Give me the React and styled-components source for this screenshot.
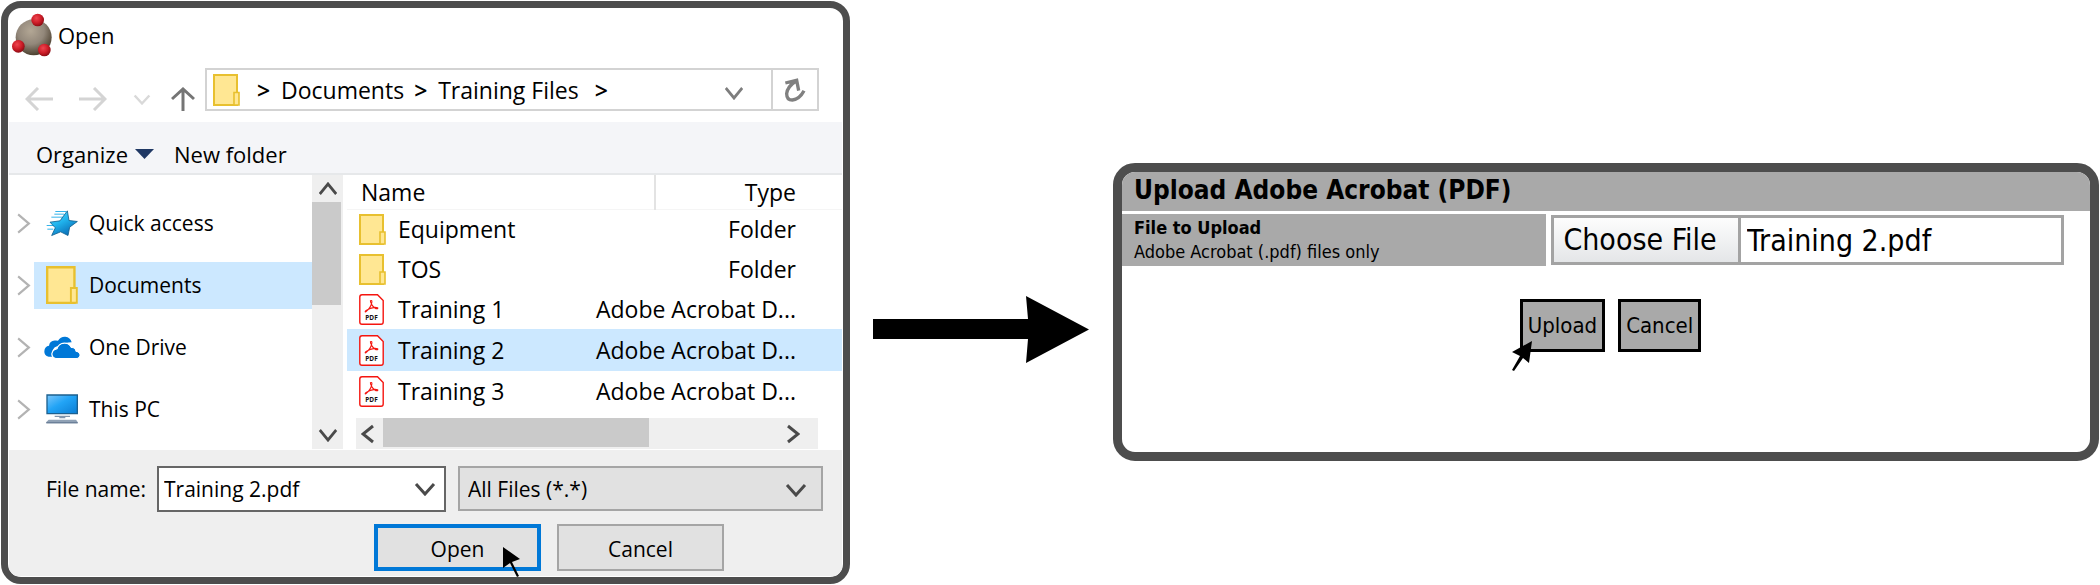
import React, {useState} from 'react';
import styled, {createGlobalStyle, css} from "styled-components";

/* ---------- icons ---------- */

const chevronPoints = {
    up: '2,12 11,2 20,12',
    down: '2,2 11,12 20,2',
    left: '12,2 2,10 12,18',
    right: '2,2 12,10 2,18',
};

const Chevron = ({dir, color = '#4a4a4a', width, height, stroke = 3}) => {
    const flat = dir === 'up' || dir === 'down';
    return (
        <svg width={width || (flat ? 22 : 14)} height={height || (flat ? 14 : 20)} preserveAspectRatio="none"
             viewBox={flat ? '0 0 22 14' : '0 0 14 20'} fill="none" aria-hidden="true">
            <polyline points={chevronPoints[dir]} stroke={color} strokeWidth={stroke}/>
        </svg>
    );
};

const AppLogo = () => (
    <svg width="40" height="44" viewBox="0 0 120 132" aria-hidden="true">
        <defs>
            <radialGradient id="ball" cx="42%" cy="32%" r="68%">
                <stop offset="0" stopColor="#b3a795"/>
                <stop offset="0.55" stopColor="#92877a"/>
                <stop offset="1" stopColor="#4d4130"/>
            </radialGradient>
            <radialGradient id="dot" cx="40%" cy="35%" r="65%">
                <stop offset="0" stopColor="#ee4650"/>
                <stop offset="0.6" stopColor="#cc1c27"/>
                <stop offset="1" stopColor="#8e0d15"/>
            </radialGradient>
        </defs>
        <circle cx="65" cy="73" r="54" fill="url(#ball)"/>
        <circle cx="77" cy="21" r="19" fill="url(#dot)"/>
        <circle cx="19" cy="100" r="19" fill="url(#dot)"/>
        <circle cx="97" cy="111" r="19" fill="url(#dot)"/>
    </svg>
);

const FolderIcon = ({width = 27, height = 32}) => (
    <svg width={width} height={height} viewBox="0 0 27 32" preserveAspectRatio="none" aria-hidden="true">
        <path d="M1 1H24V31H1Z" fill="#ffe793" stroke="#e8c02f" strokeWidth="2"/>
        <path d="M21 18.5H26V31H21Z" fill="#ffe793" stroke="#e8c02f" strokeWidth="1.6"/>
    </svg>
);

const PdfIcon = () => (
    <svg width="25" height="31" viewBox="0 0 25 31" aria-hidden="true">
        <path d="M3 0.8H18.5L24.2 6.5V28Q24.2 30.2 22 30.2H3Q0.8 30.2 0.8 28V3Q0.8 0.8 3 0.8Z"
              fill="#fff" stroke="#f5150f" strokeWidth="1.4"/>
        <path d="M11.4 6.8Q13.6 5.6 12.6 9.4Q11.6 14 6.8 17.8Q5.4 18.2 7.2 16.4Q11 14 16 13.4Q20 13.4 18.4 14.8Q15.4 14.8 12.8 10.6Q11.2 7.6 11.4 6.8Z"
              fill="none" stroke="#f5150f" strokeWidth="1.1"/>
        <text x="12.5" y="26" textAnchor="middle" fontFamily="Open Sans, sans-serif" fontSize="6.5"
              fontWeight="700" fill="#111">PDF</text>
    </svg>
);

const StarIcon = () => (
    <svg width="32" height="27" viewBox="0 0 96 80" aria-hidden="true">
        <defs>
            <linearGradient id="star" x1="0" y1="0" x2="0.6" y2="1">
                <stop offset="0" stopColor="#5fd9fb"/>
                <stop offset="0.5" stopColor="#21b5ee"/>
                <stop offset="1" stopColor="#0a6fb8"/>
            </linearGradient>
        </defs>
        <path d="M28 4H60M25 12H54M16 21H50M2 46H26M4 57H22" stroke="#35b4ea" strokeWidth="3"/>
        <path d="M64 2L69 31L94 34L71 51L66 76L44 65L17 76L28 53L12 36L42 32Z"
              fill="url(#star)" stroke="#11608f" strokeWidth="2.5" strokeLinejoin="round"/>
    </svg>
);

const CloudIcon = () => (
    <svg width="36" height="23" viewBox="0 0 108 68" aria-hidden="true">
        <path d="M14 62Q0 57 1 45Q2 31 15 29Q17 14 32 13Q38 12 42 14Q50 1 64 2Q79 4 83 18Q60 18 50 30Q30 26 24 48Q20 54 24 62Z"
              fill="#0078d7"/>
        <path d="M38 67Q24 66 24 53Q25 40 39 38Q44 22 61 21Q76 21 82 34Q94 33 96 45Q108 47 108 57Q107 67 96 67Z"
              fill="#0078d7" stroke="#fff" strokeWidth="3.5"/>
        <path d="M38 65Q26 64 26 53Q27 42 41 40Q46 24 61 23Q75 23 81 37Q93 35 94 47Q106 49 106 57Q105 65 96 65Z"
              fill="#0078d7"/>
    </svg>
);

const ComputerIcon = () => (
    <svg width="32" height="30" viewBox="0 0 96 90" aria-hidden="true">
        <defs>
            <linearGradient id="screen" x1="0" y1="0" x2="1" y2="1">
                <stop offset="0" stopColor="#7cc6fb"/>
                <stop offset="0.45" stopColor="#22a4f6"/>
                <stop offset="1" stopColor="#0b7dd3"/>
            </linearGradient>
        </defs>
        <path d="M3 3H94V59H3Z" fill="url(#screen)" stroke="#1d608f" strokeWidth="4"/>
        <path d="M26 65H72V69H58V73H40V69H26Z" fill="#8296ad"/>
        <path d="M8 77H90L95 84V88H1V84Z" fill="#8fa1b5"/>
        <path d="M1 84H95V88H1Z" fill="#6c8099"/>
    </svg>
);

const RefreshIcon = () => (
    <svg width="22" height="24" viewBox="0 0 64 72" fill="none" stroke="#808080" strokeWidth="10" aria-hidden="true">
        <path d="M3 15L37 7L43 38M35 9Q9 26 7 47Q7 66 24 66Q46 63 59 38"/>
    </svg>
);

const BackIcon = ({flip}) => (
    <svg width="28" height="24" viewBox="0 0 28 24" fill="none" stroke="#d4d4d4" strokeWidth="3" aria-hidden="true">
        <path d={flip ? 'M0 12H26M15 1L26 12L15 23' : 'M28 12H2M13 1L2 12L13 23'}/>
    </svg>
);

const UpIcon = () => (
    <svg width="24" height="24" viewBox="0 0 24 24" fill="none" stroke="#757575" strokeWidth="3" aria-hidden="true">
        <path d="M12 24V2M1 12L12 2L23 12"/>
    </svg>
);

/* ---------- shared ---------- */

const GlobalStyle = createGlobalStyle`
  * {
    box-sizing: border-box;
  }

  body {
    margin: 0;
    background: #fff;
    color: #000;
    font-family: "Open Sans", "Noto Sans", sans-serif;
  }

  button, input, select {
    margin: 0;
    padding: 0;
    border: 0;
    border-radius: 0;
    background: none;
    color: inherit;
    font: inherit;
    outline: 0;
  }

  svg {
    display: block;
    flex: none;
  }
`;

const Page = styled.main`
  display: grid;
  grid-template-columns: 849fr 263px 986fr;
  align-items: start;
  padding: 1px;
`;

const IconButton = styled.button`
  display: flex;
  align-items: center;
  justify-content: center;
`;

/* ---------- open dialog ---------- */

const Dialog = styled.section`
  border: 7px solid #4d4d4d;
  border-radius: 20px;
  overflow: hidden;
  padding: 0 1px 1px;
`;

const TitleBar = styled.header`
  display: flex;
  align-items: center;
  gap: 6px;
  height: 52px;
  padding: 2px 3px 0;

  h1 {
    margin: 0;
    font-size: 22px;
    line-height: 28px;
    font-weight: 400;
  }
`;

const NavBar = styled.nav`
  display: flex;
  align-items: flex-start;
  height: 62px;
  padding: 8px 23px 0 16px;
`;

const NavButtons = styled.div`
  display: flex;
  align-items: center;
  gap: 26px;
  flex: none;
  width: 180px;
  padding-top: 19px;

  button:nth-child(4) {
    margin-left: -6px;
  }
`;

const AddressBar = styled.div`
  display: flex;
  flex: 1;
  height: 43px;
  border: 2px solid #d3d3d3;
`;

const Crumbs = styled.div`
  display: flex;
  align-items: center;
  flex: 1;
  padding-left: 6px;
  font-size: 23px;
  line-height: 28px;
  white-space: nowrap;

  a {
    color: inherit;
    text-decoration: none;
  }

  svg {
    margin-right: 17px;
  }
`;

const Separator = styled.span`
  width: 14px;
  margin: ${({$gap}) => $gap || '0 10px'};
  font-weight: 600;
`;

const HistoryButton = styled(IconButton)`
  width: 74px;
  padding-top: 6px;
`;

const RefreshButton = styled(IconButton)`
  width: 46px;
  border-left: 2px solid #d3d3d3;
`;

const Toolbar = styled.div`
  display: flex;
  align-items: center;
  gap: 20px;
  height: 53px;
  padding: 12px 27px 0;
  border-bottom: 2px solid #e6e8ea;
  background: #f4f5f8;
  font-size: 22px;
  line-height: 28px;

  button {
    display: flex;
    align-items: center;
    gap: 7px;
  }
`;

const Body = styled.div`
  display: grid;
  grid-template-columns: 334px 1fr;
  height: 275px;
`;

const Sidebar = styled.aside`
  display: flex;
`;

const Tree = styled.ul`
  flex: 1;
  margin: 0;
  padding: 17px 0 0;
  list-style: none;
`;

const TreeItem = styled.li`
  display: flex;
  align-items: center;
  height: 62px;
  padding-left: 7px;
  gap: 3px;

  a {
    display: flex;
    align-items: center;
    flex: 1;
    height: 47px;
    color: inherit;
    font-size: 21px;
    text-decoration: none;
    ${({$active}) => $active && css`background: #cce8ff;`}
  }
`;

const TreeIcon = styled.span`
  display: flex;
  justify-content: center;
  width: 55px;
`;

const VScroll = styled.div`
  display: flex;
  flex-direction: column;
  align-items: center;
  justify-content: space-between;
  width: 31px;
  margin-bottom: 1px;
  padding-bottom: 1px;
  background: #efefef;

  button {
    height: 27px;
  }
`;

const VThumb = styled.div`
  width: 29px;
  height: 103px;
  margin: 0 2px auto 0;
  background: #cacaca;
`;

const FilePane = styled.div`
  display: flex;
  flex-direction: column;
`;

const FileTable = styled.table`
  width: 100%;
  border-collapse: collapse;
  table-layout: fixed;
  font-size: 23px;
  line-height: 28px;
  white-space: nowrap;

  col:nth-child(2) {
    width: 100px;
  }

  col:nth-child(3) {
    width: 187px;
  }

  th {
    height: 34px;
    padding: 0 16px;
    font-weight: 400;
    text-align: left;
    border-bottom: 1px solid #f5f5f5;
  }

  th:last-child {
    padding-right: 46px;
    border-left: 2px solid #e3e3e3;
    text-align: right;
  }
`;

const FileRow = styled.tr`
  td {
    height: 40px;
    padding: 0;
    ${({$selected}) => $selected && css`
      height: 42px;
      background: #cce8ff;
    `}
  }

  /* selection starts a little inside the pane */
  td:first-child {
    border-left: 4px solid #fff;
  }

  td:last-child {
    padding-right: 46px;
    text-align: right;
  }
`;

const FileName = styled.div`
  display: flex;
  align-items: center;
  padding-left: 12px;

  span {
    width: 39px;
  }
`;

const HScroll = styled.div`
  display: flex;
  align-items: center;
  justify-content: space-between;
  height: 31px;
  margin: auto 24px 1px 13px;
  padding-right: 18px;
  background: #efefef;

  button:first-child {
    width: 27px;
    padding-right: 4px;
  }
`;

const HThumb = styled.div`
  flex: none;
  width: 60%;
  height: 29px;
  margin: 0 auto 2px 0;
  background: #cacaca;
`;

const Footer = styled.form`
  padding: 16px 19px 5px 37px;
  background: #efefef;
  font-size: 21px;
  line-height: 28px;
`;

const FieldRow = styled.div`
  display: grid;
  grid-template-columns: 111px minmax(0, 289fr) minmax(0, 377fr);
  align-items: start;

  label {
    line-height: 46px;
  }
`;

const ComboBox = styled.div`
  display: flex;
  align-items: center;
  height: 46px;
  padding: 0 8px 0 5px;
  border: 2px solid #666;
  background: #fff;

  input {
    flex: 1;
    min-width: 0;
  }
`;

const SelectBox = styled.div`
  position: relative;
  margin-left: 12px;

  select {
    width: 100%;
    height: 45px;
    padding-left: 8px;
    border: 2px solid #a5a5a5;
    background: #e1e1e1;
    appearance: none;
  }

  svg {
    position: absolute;
    top: 17px;
    right: 16px;
    pointer-events: none;
  }
`;

const Actions = styled.div`
  display: flex;
  gap: 16px;
  padding: 12px 0 0 328px;
`;

const DialogButton = styled.button`
  position: relative;
  width: 167px;
  height: 47px;
  padding-top: 2px;
  border: ${({$primary}) => $primary ? '4px solid #0078d7' : '2px solid #a5a5a5'};
  background: #e1e1e1;
`;

const Cursor = styled.svg`
  position: absolute;
  left: ${({$left}) => $left};
  top: ${({$top}) => $top};
`;

/* ---------- arrow between the panels ---------- */

const ArrowWrap = styled.div`
  padding: 295px 0 0 23px;
`;

/* ---------- upload panel ---------- */

const Panel = styled.section`
  margin-top: 162px;
  min-height: 298px;
  border: 9px solid #4d4d4d;
  border-radius: 22px;
  overflow: hidden;
  font-family: "DejaVu Sans Condensed", "DejaVu Sans", sans-serif;
`;

const PanelTitle = styled.h2`
  margin: 0 0 3px;
  padding: 0 12px 3px;
  background: #a9a9a9;
  font-size: 26px;
  line-height: 36px;
  font-weight: 700;
`;

const UploadRow = styled.div`
  display: grid;
  grid-template-columns: minmax(0, 424fr) minmax(0, 513fr);
  column-gap: 5px;
  padding-right: 26px;
`;

const UploadLabel = styled.label`
  display: block;
  height: 52px;
  padding: 2px 12px;
  background: #a9a9a9;
  font-size: 18px;
  line-height: 24px;

  strong {
    display: block;
  }
`;

const FilePicker = styled.div`
  display: flex;
  height: 50px;
  margin-top: 1px;
  border: 3px solid #a3a3a3;
  font-size: 30px;

  button {
    flex: none;
    width: 187px;
    padding-right: 12px;
    border-right: 3px solid #a3a3a3;
    background: linear-gradient(#fdfdfd, #e4e6e8);
    line-height: 36px;
    white-space: nowrap;
  }

  input {
    flex: 1;
    min-width: 0;
    padding-left: 6px;
  }
`;

const UploadActions = styled.div`
  display: flex;
  justify-content: center;
  gap: 13px;
  padding: 33px 0 0 9px;
`;

const UploadButton = styled.button`
  position: relative;
  height: 53px;
  padding: 0 5px;
  border: 3px solid #000;
  background: #a9a9a9;
  font-size: 22px;
`;

/* ---------- data ---------- */

const places = [
    {name: 'Quick access', icon: <StarIcon/>},
    {name: 'Documents', icon: <FolderIcon width={32} height={38}/>, active: true},
    {name: 'One Drive', icon: <CloudIcon/>},
    {name: 'This PC', icon: <ComputerIcon/>},
];

const files = [
    {name: 'Equipment', type: 'Folder'},
    {name: 'TOS', type: 'Folder'},
    {name: 'Training 1', type: 'Adobe Acrobat D...'},
    {name: 'Training 2', type: 'Adobe Acrobat D...'},
    {name: 'Training 3', type: 'Adobe Acrobat D...'},
];

const OpenDialog = ({fileName, setFileName}) => (
    <Dialog>
        <TitleBar>
            <AppLogo/>
            <h1>Open</h1>
        </TitleBar>

        <NavBar>
            <NavButtons>
                <IconButton aria-label="Back"><BackIcon/></IconButton>
                <IconButton aria-label="Forward"><BackIcon flip/></IconButton>
                <IconButton aria-label="Recent"><Chevron dir="down" color="#d9d9d9" width={18} height={11}/></IconButton>
                <IconButton aria-label="Up"><UpIcon/></IconButton>
            </NavButtons>
            <AddressBar>
                <Crumbs>
                    <FolderIcon/>
                    <Separator $gap="0 10px 0 0">&gt;</Separator>
                    <a href="#documents">Documents</a>
                    <Separator>&gt;</Separator>
                    <a href="#training">Training Files</a>
                    <Separator $gap="0 16px">&gt;</Separator>
                </Crumbs>
                <HistoryButton aria-label="Previous locations">
                    <Chevron dir="down" color="#7d7d7d" width={20}/>
                </HistoryButton>
                <RefreshButton aria-label="Refresh"><RefreshIcon/></RefreshButton>
            </AddressBar>
        </NavBar>

        <Toolbar>
            <button>
                Organize
                <svg width="19" height="10" viewBox="0 0 19 10" aria-hidden="true">
                    <path d="M0 0H19L9.5 10Z" fill="#1f3864"/>
                </svg>
            </button>
            <button>New folder</button>
        </Toolbar>

        <Body>
            <Sidebar>
                <Tree>
                    {places.map(item => (
                        <TreeItem key={item.name} $active={item.active}>
                            <Chevron dir="right" color="#b3b3b3" width={15} height={23} stroke={2}/>
                            <a href="#place">
                                <TreeIcon>{item.icon}</TreeIcon>
                                {item.name}
                            </a>
                        </TreeItem>
                    ))}
                </Tree>
                <VScroll>
                    <IconButton aria-label="Scroll up"><Chevron dir="up" width={20}/></IconButton>
                    <VThumb/>
                    <IconButton aria-label="Scroll down"><Chevron dir="down" width={20}/></IconButton>
                </VScroll>
            </Sidebar>

            <FilePane>
                <FileTable>
                    <colgroup>
                        <col/>
                        <col/>
                        <col/>
                    </colgroup>
                    <thead>
                    <tr>
                        <th colSpan={2}>Name</th>
                        <th>Type</th>
                    </tr>
                    </thead>
                    <tbody>
                    {files.map(item => (
                        <FileRow key={item.name} $selected={item.name + '.pdf' === fileName}>
                            <td>
                                <FileName>
                                    <span>{item.type === 'Folder' ? <FolderIcon height={31}/> : <PdfIcon/>}</span>
                                    {item.name}
                                </FileName>
                            </td>
                            <td colSpan={2}>{item.type}</td>
                        </FileRow>
                    ))}
                    </tbody>
                </FileTable>
                <HScroll>
                    <IconButton aria-label="Scroll left"><Chevron dir="left"/></IconButton>
                    <HThumb/>
                    <IconButton aria-label="Scroll right"><Chevron dir="right"/></IconButton>
                </HScroll>
            </FilePane>
        </Body>

        <Footer onSubmit={e => e.preventDefault()}>
            <FieldRow>
                <label htmlFor="file-name">File name:</label>
                <ComboBox>
                    <input id="file-name" value={fileName} onChange={e => setFileName(e.target.value)}/>
                    <IconButton type="button" aria-label="Recent names"><Chevron dir="down"/></IconButton>
                </ComboBox>
                <SelectBox>
                    <select aria-label="File type">
                        <option>All Files (*.*)</option>
                    </select>
                    <Chevron dir="down"/>
                </SelectBox>
            </FieldRow>
            <Actions>
                <DialogButton $primary>
                    Open
                    <Cursor $left="125px" $top="19px" width="18" height="31" viewBox="0 0 18 31" aria-hidden="true">
                        <path d="M0 0L17 12L9 15L16 29L14 30L7 16L0 21Z"/>
                    </Cursor>
                </DialogButton>
                <DialogButton type="button">Cancel</DialogButton>
            </Actions>
        </Footer>
    </Dialog>
);

const UploadPanel = ({fileName}) => (
    <Panel>
        <PanelTitle>Upload Adobe Acrobat (PDF)</PanelTitle>
        <UploadRow>
            <UploadLabel htmlFor="upload-file">
                <strong>File to Upload</strong>
                Adobe Acrobat (.pdf) files only
            </UploadLabel>
            <FilePicker>
                <button type="button">Choose File</button>
                <input id="upload-file" value={fileName} readOnly/>
            </FilePicker>
        </UploadRow>
        <UploadActions>
            <UploadButton>
                Upload
                <Cursor $left="-11px" $top="39px" width="21" height="30" viewBox="0 0 21 30" aria-hidden="true">
                    <path d="M20 0L17 22L11 17L2 30L0 29L8 15L0 11Z"/>
                </Cursor>
            </UploadButton>
            <UploadButton>Cancel</UploadButton>
        </UploadActions>
    </Panel>
);

const App = () => {
    const [fileName, setFileName] = useState('Training 2.pdf');

    return (
        <>
            <GlobalStyle/>
            <Page>
                <OpenDialog fileName={fileName} setFileName={setFileName}/>
                <ArrowWrap>
                    <svg width="216" height="67" viewBox="0 0 216 67" aria-hidden="true">
                        <path d="M0 23H155L153 0L216 33.5L153 67L155 43H0Z"/>
                    </svg>
                </ArrowWrap>
                <UploadPanel fileName={fileName}/>
            </Page>
        </>
    );
};

export default App;
